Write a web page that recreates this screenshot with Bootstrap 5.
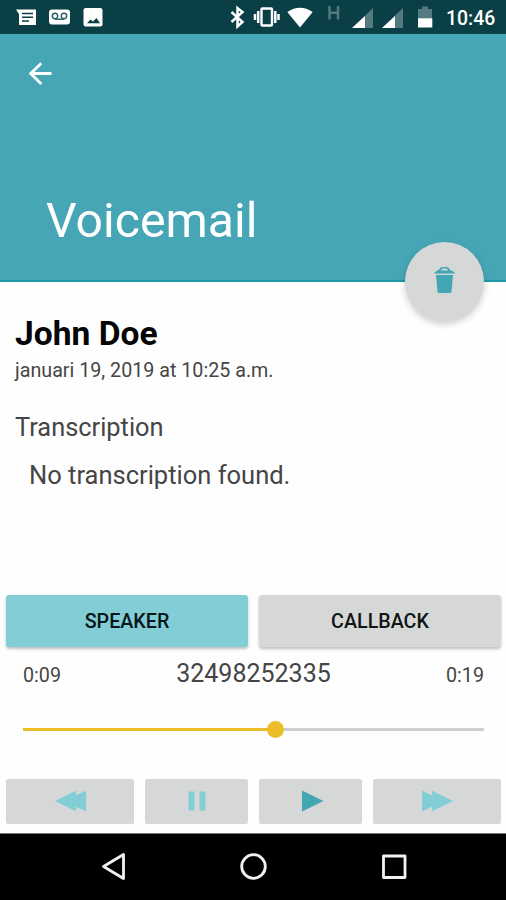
<!DOCTYPE html>
<html lang="en">
<head>
<meta charset="utf-8">
<meta name="viewport" content="width=device-width, initial-scale=1">
<title>Voicemail</title>
<link href="https://cdn.jsdelivr.net/npm/bootstrap@5.3.0/dist/css/bootstrap.min.css" rel="stylesheet">
<style>
body{font-family:Roboto,sans-serif;width:506px;height:900px;overflow:hidden;background:#fefefe;color:#454545}
svg{display:block;flex:none}
.status-bar{height:34px;background:#0b3f46;border-bottom:1px solid #0a4a52;padding:0 9px 0 15px}
.gap-7{margin-left:7px}.gap-8{margin-left:8px}.gap-11{margin-left:11px}.gap-12{margin-left:12px}.gap-14{margin-left:14px}
.clock{font-size:19.400px;line-height:38px;font-weight:500;margin-left:13px;width:51px;white-space:nowrap}
.app-head{height:248px;background:#47a6b5;border-bottom:2px solid #1f99a7;padding:26px 0 0 26px}
.page-title{font-size:48.2px;line-height:48px;margin:109px 0 0 20px;font-weight:400;color:#fff}
.trash-btn{width:79px;height:79px;left:405px;top:208px;background:#d6d8d8;border:0;box-shadow:0 3px 7px rgba(0,0,0,.2);padding:0 0 3px}
.details{height:313px;padding:34px 15px 0}
.caller{font-size:33.600px;line-height:36px;font-weight:700;color:#050505;margin:0}
.when{font-size:19.700px;line-height:24px;margin-top:7px}
.section-name{font-size:25.400px;line-height:32px;margin-top:28px}
.message{font-size:25.500px;line-height:32px;margin:16px 0 0 14px}
.actions{padding:0 5px 0 6px;gap:11px}
.actions .btn{height:52px;padding:2px 0 0;border:0;border-radius:3px;font-size:19.700px;font-weight:500;color:#101414;background:#d6d8d7;box-shadow:0 2px 3px rgba(0,0,0,.25)}
.actions .speaker{background:#83cdd6;color:#071719}
.times{height:51px;padding:11px 22px 0 23px}
.time{font-size:19.700px;line-height:24px;width:60px;margin-top:6px}
.number{font-size:25px;line-height:32px}
.seek{height:18px;margin:22px 22px 0 23px}
.seek-line{height:3px;background:#cecece}
.seek-fill{height:3px;background:#ebbd27}
.knob{width:17px;height:17px;background:#ebbd27;margin:0 -8px;z-index:1}
.controls{padding:0 5px 0 6px;gap:11px;margin-top:41px}
.controls .btn{height:45px;border:0;border-radius:2px;padding:0 0 1px;background:#d6d8d7}
.controls .play{padding-left:4px}
.wide{width:128px}.narrow{width:103px}
.nav-keys{height:67px;background:#000;border-top:1px solid #777}
</style>
<script src="https://cdn.jsdelivr.net/npm/bootstrap@5.3.0/dist/js/bootstrap.bundle.min.js"></script>
</head>
<body class="d-flex flex-column">
<div class="status-bar d-flex text-white flex-shrink-0">
  <svg width="22" height="34" viewBox="15 0 22 34"><path fill="#fff" d="M16 9.500h20V25H19V14z"/><path stroke="#0b3f46" stroke-width="1.500" d="M22 13.500h11M22 17.200h11M22 21h7"/></svg>
  <svg width="22" height="34" viewBox="49 0 22 34" class="gap-12"><rect x="49" y="9.500" width="21" height="15" rx="3" fill="#fff"/><g fill="none" stroke="#33636a" stroke-width="1.500"><circle cx="55" cy="16" r="2.700"/><circle cx="64" cy="16" r="2.700"/><path d="M55 19.200h9"/></g></svg>
  <svg width="21" height="34" viewBox="83 0 21 34" class="gap-12"><rect x="83.500" y="8" width="19" height="18.500" rx="2.200" fill="#fff"/><path fill="#0b3f46" d="M87 23.200l3.500-3.700 2.500 2 3.500-3.500 3.500 5.200z"/></svg>
  <svg width="16" height="34" viewBox="230 0 16 34" class="ms-auto"><path fill="none" stroke="#fff" stroke-width="2.500" d="M231.500 12l11 10-5 4.500V8l5 4-11 10"/></svg>
  <svg width="27" height="34" viewBox="253 0 27 34" class="gap-7"><rect x="261.500" y="8.500" width="10.500" height="17" rx="1" fill="none" stroke="#fff" stroke-width="2.400"/><path stroke="#fff" stroke-width="2.500" d="M258.200 11v12M255 14v6M275.300 11v12M278.500 14v6"/></svg>
  <svg width="26" height="34" viewBox="287 0 26 34" class="gap-7"><path fill="#fff" d="M287.300 12Q300 3.500 312.700 12L300 27.500z"/></svg>
  <svg width="14" height="34" viewBox="327 0 14 34" class="gap-14"><path fill="none" stroke="#54797e" stroke-width="2.500" d="M329.500 6v13.500M338 6v13.500M329.500 12.700h8.500"/></svg>
  <svg width="22" height="34" viewBox="352 0 22 34" class="gap-11"><path fill="#54797e" d="M373 8v20h-21z"/><path fill="#fff" d="M365 16v12h-13z"/></svg>
  <svg width="22" height="34" viewBox="382 0 22 34" class="gap-8"><path fill="#54797e" d="M403 8v20h-21z"/><path fill="#fff" d="M395 16v12h-13z"/></svg>
  <svg width="15" height="34" viewBox="418 0 15 34" class="gap-14"><path fill="#54797e" d="M418 9h4V6.500h6V9h4v10h-14z"/><path fill="#fff" d="M418 18.300h14.300V27.500H418z"/></svg>
  <div class="clock">10:46</div>
</div>
<header class="app-head position-relative flex-shrink-0">
  <a href="#" aria-label="Back"><svg width="28" height="28" viewBox="26 60 28 28"><path fill="none" stroke="#fff" stroke-width="2.800" d="M51.500 73.500H31M41.300 63.200L30.700 73.500l10.600 10.400"/></svg></a>
  <h1 class="page-title">Voicemail</h1>
  <button class="trash-btn btn rounded-circle position-absolute d-flex align-items-center justify-content-center" aria-label="Delete"><svg width="22" height="28" viewBox="434 267 22 28"><path fill="#43a6b3" d="M436 276h17l-1.500 16.500q-.2 1.500-1.500 1.500h-11q-1.300 0-1.500-1.500z"/><path fill="#43a6b3" d="M434.800 274.700v-1.500q3-1.900 4-2.400 1-2.800 3.500-2.800h4.200q2.500 0 3.500 2.800l4.500 2.400v1.500z"/><path fill="#d6d8d8" d="M441 271.600q.5-2 1.800-2h3.200q1.500 0 2 2zM435.500 274.700h18v1h-18z"/></svg></button>
</header>
<main class="flex-shrink-0">
  <section class="details">
    <h2 class="caller">John Doe</h2>
    <div class="when">januari 19, 2019 at 10:25 a.m.</div>
    <div class="section-name">Transcription</div>
    <div class="message">No transcription found.</div>
  </section>
  <div class="actions d-flex">
    <button class="btn speaker flex-fill w-50">SPEAKER</button>
    <button class="btn flex-fill w-50">CALLBACK</button>
  </div>
  <div class="times d-flex justify-content-between">
    <div class="time">0:09</div><div class="number">32498252335</div><div class="time text-end">0:19</div>
  </div>
  <div class="seek d-flex align-items-center">
    <div class="seek-fill" style="width:54.6%"></div><div class="knob rounded-circle"></div><div class="seek-line flex-fill"></div>
  </div>
  <div class="controls d-flex">
    <button class="btn wide d-flex align-items-center justify-content-center" aria-label="Rewind"><svg width="33" height="22" viewBox="0 0 33 22"><path fill="#83cdd6" d="M1 11L22 .8v4.400L32 .8v20.500l-10-4.500v4.500z"/></svg></button>
    <button class="btn narrow d-flex align-items-center justify-content-center" aria-label="Pause"><svg width="18" height="20" viewBox="0 0 18 20"><path fill="#83cdd6" d="M.5.500h6v19h-6zM11.500.500h6v19h-6z"/></svg></button>
    <button class="btn narrow play d-flex align-items-center justify-content-center" aria-label="Play"><svg width="22" height="22" viewBox="0 0 22 22"><path fill="#43a6b3" d="M0 .5L21.500 11 0 21.500z"/></svg></button>
    <button class="btn wide d-flex align-items-center justify-content-center" aria-label="Forward"><svg width="33" height="22" viewBox="0 0 33 22"><path fill="#83cdd6" d="M32 11L11 .8v4.400L1 .8v20.500l10-4.500v4.500z"/></svg></button>
  </div>
</main>
<nav class="nav-keys mt-auto d-flex flex-shrink-0">
  <svg width="506" height="66" viewBox="0 834 506 66"><g fill="none" stroke="#f2f2f2" stroke-width="2.800" stroke-linejoin="round"><path d="M103.500 866.500l20-12v24z"/><circle cx="253.500" cy="866.500" r="11.800"/><rect x="383.500" y="856" width="21.500" height="21.500"/></g></svg>
</nav>
</body>
</html>
